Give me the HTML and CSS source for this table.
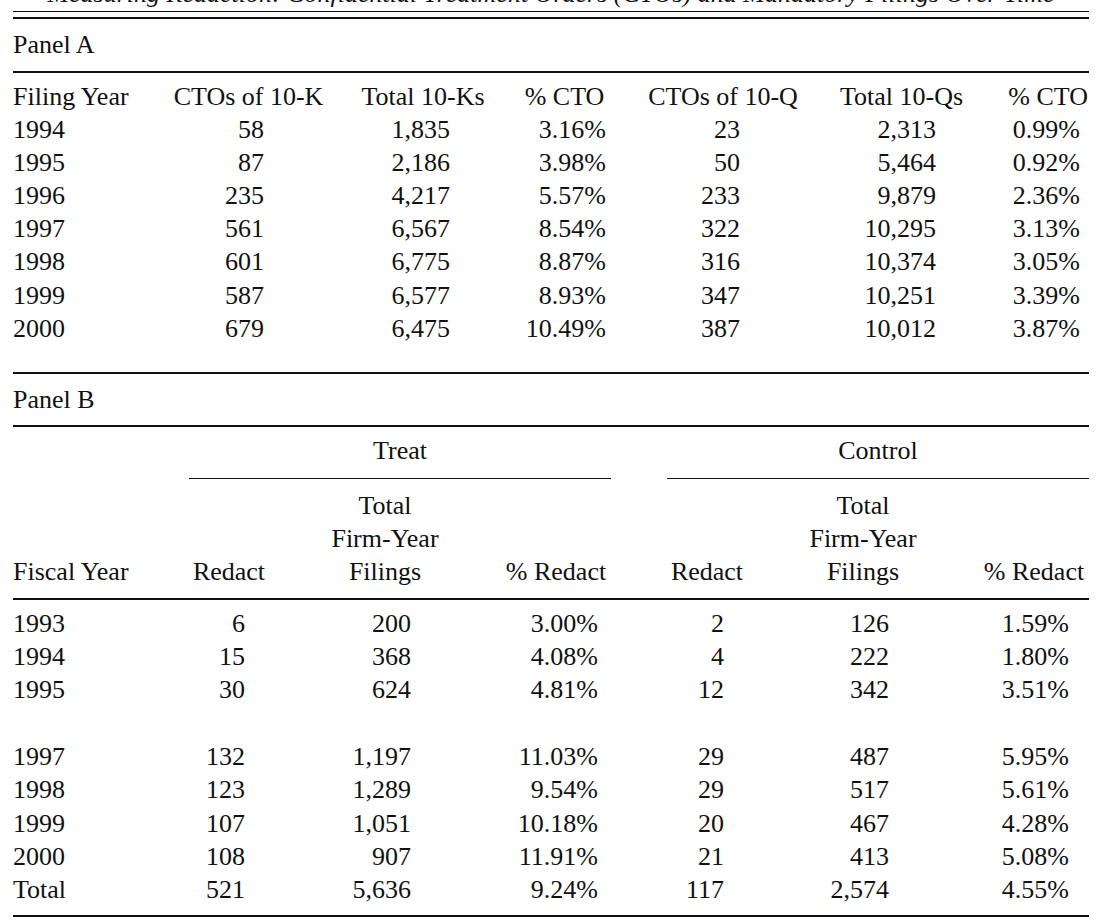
FILE: index.html
```html
<!DOCTYPE html>
<html lang="en">
<head>
<meta charset="utf-8">
<title>Measuring Redaction</title>
<link rel="stylesheet" href="styles.css">
</head>
<body>
<div class="page">
  <div class="title">Measuring Redaction: Confidential Treatment Orders (CTOs) and Mandatory Filings Over Time</div>
  <div class="double-rule"></div>

  <section class="panel">
    <div class="panel-label">Panel A</div>
    <div class="rule rule-a"></div>
    <div class="grid-a head-a">
      <div class="c-left">Filing Year</div>
      <div class="c-center">CTOs of 10-K</div>
      <div class="c-center">Total 10-Ks</div>
      <div class="c-center">% CTO</div>
      <div class="c-center">CTOs of 10-Q</div>
      <div class="c-center">Total 10-Qs</div>
      <div class="c-right-h">% CTO</div>
    </div>
    <div class="grid-a row-a"><div class="c-left">1994</div><div class="a2">58</div><div class="a3">1,835</div><div class="a4">3.16%</div><div class="a5">23</div><div class="a6">2,313</div><div class="a7">0.99%</div></div>
    <div class="grid-a row-a"><div class="c-left">1995</div><div class="a2">87</div><div class="a3">2,186</div><div class="a4">3.98%</div><div class="a5">50</div><div class="a6">5,464</div><div class="a7">0.92%</div></div>
    <div class="grid-a row-a"><div class="c-left">1996</div><div class="a2">235</div><div class="a3">4,217</div><div class="a4">5.57%</div><div class="a5">233</div><div class="a6">9,879</div><div class="a7">2.36%</div></div>
    <div class="grid-a row-a"><div class="c-left">1997</div><div class="a2">561</div><div class="a3">6,567</div><div class="a4">8.54%</div><div class="a5">322</div><div class="a6">10,295</div><div class="a7">3.13%</div></div>
    <div class="grid-a row-a"><div class="c-left">1998</div><div class="a2">601</div><div class="a3">6,775</div><div class="a4">8.87%</div><div class="a5">316</div><div class="a6">10,374</div><div class="a7">3.05%</div></div>
    <div class="grid-a row-a"><div class="c-left">1999</div><div class="a2">587</div><div class="a3">6,577</div><div class="a4">8.93%</div><div class="a5">347</div><div class="a6">10,251</div><div class="a7">3.39%</div></div>
    <div class="grid-a row-a"><div class="c-left">2000</div><div class="a2">679</div><div class="a3">6,475</div><div class="a4">10.49%</div><div class="a5">387</div><div class="a6">10,012</div><div class="a7">3.87%</div></div>
  </section>

  <section class="panel">
    <div class="rule rule-top-b"></div>
    <div class="panel-label">Panel B</div>
    <div class="rule rule-b"></div>
    <div class="grid-b group-row">
      <div class="group treat">Treat</div>
      <div class="group control">Control</div>
    </div>
    <div class="grid-b head-b">
      <div class="c-left">Fiscal Year</div>
      <div class="c-center">Redact</div>
      <div class="c-center">Total<br>Firm-Year<br>Filings</div>
      <div class="c-center">% Redact</div>
      <div class="spacer"></div>
      <div class="c-center">Redact</div>
      <div class="c-center">Total<br>Firm-Year<br>Filings</div>
      <div class="c-center">% Redact</div>
    </div>
    <div class="rule rule-head-b"></div>
    <div class="rows-b">
      <div class="grid-b row-b"><div class="c-left">1993</div><div class="b2">6</div><div class="b3">200</div><div class="b4">3.00%</div><div class="spacer"></div><div class="b5">2</div><div class="b6">126</div><div class="b7">1.59%</div></div>
      <div class="grid-b row-b"><div class="c-left">1994</div><div class="b2">15</div><div class="b3">368</div><div class="b4">4.08%</div><div class="spacer"></div><div class="b5">4</div><div class="b6">222</div><div class="b7">1.80%</div></div>
      <div class="grid-b row-b"><div class="c-left">1995</div><div class="b2">30</div><div class="b3">624</div><div class="b4">4.81%</div><div class="spacer"></div><div class="b5">12</div><div class="b6">342</div><div class="b7">3.51%</div></div>
      <div class="grid-b row-b row-empty"></div>
      <div class="grid-b row-b"><div class="c-left">1997</div><div class="b2">132</div><div class="b3">1,197</div><div class="b4">11.03%</div><div class="spacer"></div><div class="b5">29</div><div class="b6">487</div><div class="b7">5.95%</div></div>
      <div class="grid-b row-b"><div class="c-left">1998</div><div class="b2">123</div><div class="b3">1,289</div><div class="b4">9.54%</div><div class="spacer"></div><div class="b5">29</div><div class="b6">517</div><div class="b7">5.61%</div></div>
      <div class="grid-b row-b"><div class="c-left">1999</div><div class="b2">107</div><div class="b3">1,051</div><div class="b4">10.18%</div><div class="spacer"></div><div class="b5">20</div><div class="b6">467</div><div class="b7">4.28%</div></div>
      <div class="grid-b row-b"><div class="c-left">2000</div><div class="b2">108</div><div class="b3">907</div><div class="b4">11.91%</div><div class="spacer"></div><div class="b5">21</div><div class="b6">413</div><div class="b7">5.08%</div></div>
      <div class="grid-b row-b"><div class="c-left">Total</div><div class="b2">521</div><div class="b3">5,636</div><div class="b4">9.24%</div><div class="spacer"></div><div class="b5">117</div><div class="b6">2,574</div><div class="b7">4.55%</div></div>
    </div>
    <div class="rule rule-bottom"></div>
  </section>
</div>
</body>
</html>
```

FILE: styles.css
```css
html, body {
  margin: 0;
  padding: 0;
  background: #ffffff;
}

body {
  color: #111111;
  font-family: "Liberation Serif", "Times New Roman", serif;
  font-size: 26px;
  line-height: 33.17px;
}

.page {
  display: flow-root;
  width: 1076px;
  margin-left: 13px;
}

.title {
  font-style: italic;
  text-align: center;
  white-space: nowrap;
  margin-top: -23.4px;
  margin-bottom: 1.04px;
}

.double-rule {
  margin-top: 0.2px;
  height: 5.5px;
  border-top: 1.5px solid #111111;
  border-bottom: 2px solid #111111;
}

.panel-label {
  margin-top: 8.64px;
}

.rule {
  border-top: 2px solid #111111;
}

.rule-a { margin-top: 10.2px; }
.rule-top-b { margin-top: 27.3px; }
.rule-b { margin-top: 9.2px; }
.rule-head-b { margin-top: 9.5px; }
.rule-bottom { margin-top: 8.3px; }

/* Panel A */
.grid-a {
  display: grid;
  grid-template-columns: 140px 191px 158px 125px 192px 165px 105px;
  white-space: nowrap;
}

.head-a { margin-top: 6.3px; }

.c-left { text-align: left; }
.c-center { text-align: center; }
.c-right-h { text-align: right; padding-right: 1px; }

.row-a > div:not(.c-left) { text-align: right; }
.a2 { padding-right: 80px; }
.a3 { padding-right: 52px; }
.a4 { padding-right: 21px; }
.a5 { padding-right: 79px; }
.a6 { padding-right: 48px; }
.a7 { padding-right: 9px; }

/* Panel B */
.grid-b {
  display: grid;
  grid-template-columns: 176px 80px 232px 110px 56px 80px 232px 110px;
  white-space: nowrap;
}

.group-row { margin-top: 6.64px; }

.group {
  text-align: center;
  padding-bottom: 11px;
  border-bottom: 1.5px solid #111111;
}

.treat { grid-column: 2 / 5; }
.control { grid-column: 6 / 9; }

.head-b {
  margin-top: 9.6px;
  line-height: 33.3px;
  align-items: end;
}

.rows-b {
  margin-top: 6.6px;
  line-height: 33.35px;
}

.row-empty { height: 33.35px; }

.row-b > div:not(.c-left) { text-align: right; }
.b2 { padding-right: 24px; }
.b3 { padding-right: 90px; }
.b4 { padding-right: 13px; }
.b5 { padding-right: 23px; }
.b6 { padding-right: 90px; }
.b7 { padding-right: 20px; }
```
